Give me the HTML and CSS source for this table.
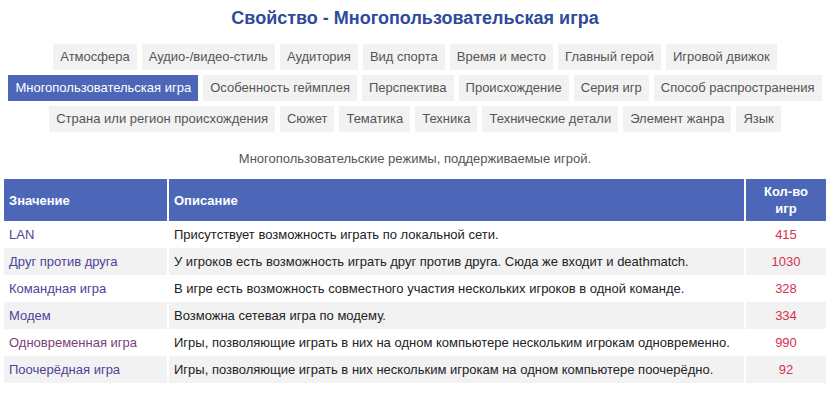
FILE: index.html
```html
<!DOCTYPE html>
<html lang="ru">
<head>
    <meta charset="UTF-8">
    <meta name="viewport" content="width=device-width, initial-scale=1.0">
    <title>Свойство - Многопользовательская игра</title>
    <link rel="stylesheet" href="styles.css">
</head>
<body>
    <div class="page">
        <h1 class="title">Свойство - Многопользовательская игра</h1>

        <!-- список свойств, активное подсвечено -->
        <div class="props">
            <div class="props-row">
                <a class="prop" href="#">Атмосфера</a>
                <a class="prop" href="#">Аудио-/видео-стиль</a>
                <a class="prop" href="#">Аудитория</a>
                <a class="prop" href="#">Вид спорта</a>
                <a class="prop" href="#">Время и место</a>
                <a class="prop" href="#">Главный герой</a>
                <a class="prop" href="#">Игровой движок</a>
            </div>
            <div class="props-row">
                <a class="prop active" href="#">Многопользовательская игра</a>
                <a class="prop" href="#">Особенность геймплея</a>
                <a class="prop" href="#">Перспектива</a>
                <a class="prop" href="#">Происхождение</a>
                <a class="prop" href="#">Серия игр</a>
                <a class="prop" href="#">Способ распространения</a>
            </div>
            <div class="props-row">
                <a class="prop" href="#">Страна или регион происхождения</a>
                <a class="prop" href="#">Сюжет</a>
                <a class="prop" href="#">Тематика</a>
                <a class="prop" href="#">Техника</a>
                <a class="prop" href="#">Технические детали</a>
                <a class="prop" href="#">Элемент жанра</a>
                <a class="prop" href="#">Язык</a>
            </div>
        </div>

        <p class="about">Многопользовательские режимы, поддерживаемые игрой.</p>

        <table class="values">
            <thead>
                <tr>
                    <th class="col-name">Значение</th>
                    <th class="col-desc">Описание</th>
                    <th class="col-count">Кол-во<br>игр</th>
                </tr>
            </thead>
            <tbody>
                <tr>
                    <td><a href="#">LAN</a></td>
                    <td>Присутствует возможность играть по локальной сети.</td>
                    <td class="count"><a href="#">415</a></td>
                </tr>
                <tr>
                    <td><a href="#">Друг против друга</a></td>
                    <td>У игроков есть возможность играть друг против друга. Сюда же входит и deathmatch.</td>
                    <td class="count"><a href="#">1030</a></td>
                </tr>
                <tr>
                    <td><a href="#">Командная игра</a></td>
                    <td>В игре есть возможность совместного участия нескольких игроков в одной команде.</td>
                    <td class="count"><a href="#">328</a></td>
                </tr>
                <tr>
                    <td><a href="#">Модем</a></td>
                    <td>Возможна сетевая игра по модему.</td>
                    <td class="count"><a href="#">334</a></td>
                </tr>
                <tr>
                    <td><a class="visited" href="#">Одновременная игра</a></td>
                    <td>Игры, позволяющие играть в них на одном компьютере нескольким игрокам одновременно.</td>
                    <td class="count"><a href="#">990</a></td>
                </tr>
                <tr>
                    <td><a href="#">Поочерёдная игра</a></td>
                    <td>Игры, позволяющие играть в них нескольким игрокам на одном компьютере поочерёдно.</td>
                    <td class="count"><a href="#">92</a></td>
                </tr>
            </tbody>
        </table>
    </div>
</body>
</html>
```

FILE: styles.css
```css
body {
    font-family: "Liberation Sans", Arial, sans-serif;
    font-size: 13px;
    color: #222;
    background-color: #fff;
    margin: 0;
}
.page {
    padding: 0 8px 0 4px;
}
a {
    text-decoration: none;
}
.title {
    margin: 0;
    padding-top: 7px;
    height: 44px;
    line-height: 22px;
    box-sizing: border-box;
    text-align: center;
    font-size: 18px;
    font-weight: bold;
    color: #2e4b9b;
}
.props {
    display: flex;
    flex-direction: column;
    gap: 5px;
}
.props-row {
    display: flex;
    justify-content: center;
    gap: 5px;
}
.prop {
    display: block;
    height: 26px;
    line-height: 26px;
    padding: 0 7px;
    background-color: #f2f2f2;
    color: #555;
    white-space: nowrap;
}
.prop.active {
    background-color: #4c66b8;
    color: #fff;
}
.about {
    margin: 0;
    height: 47px;
    line-height: 54px;
    text-align: center;
    color: #555;
}
.values {
    width: 100%;
    border-collapse: collapse;
    table-layout: fixed;
}
.values th {
    height: 42px;
    padding: 0 5px;
    background-color: #4c66b8;
    color: #fff;
    font-weight: bold;
    text-align: left;
    border-left: 2px solid #fff;
    line-height: 17px;
}
.values th:first-child,
.values td:first-child {
    border-left: none;
}
.values .col-name {
    width: 153px;
}
.values .col-count {
    width: 70px;
    text-align: center;
}
.values td {
    height: 27px;
    padding: 0 5px;
    border-left: 2px solid #fff;
    white-space: nowrap;
}
.values tbody tr:nth-child(even) td {
    background-color: #f2f2f2;
}
.values td a {
    color: #4e4399;
}
.values td a.visited {
    color: #7a3f78;
}
.values td.count {
    text-align: center;
}
.values td.count a {
    color: #d6304f;
}
```
